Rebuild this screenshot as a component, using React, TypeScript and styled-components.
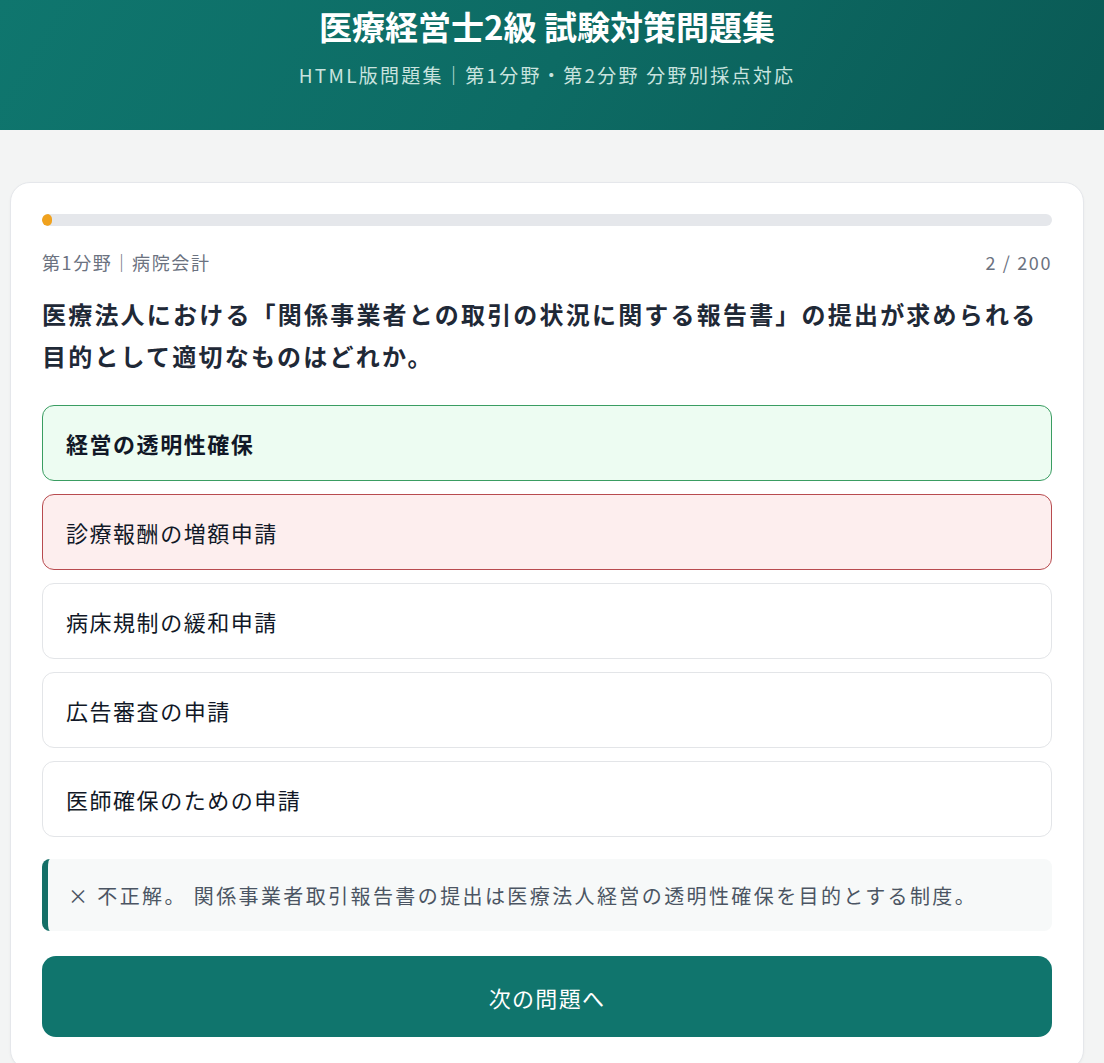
import React from "react";
import styled, { createGlobalStyle } from "styled-components";

const Global = createGlobalStyle`
  html, body { margin: 0; padding: 0; background: #f3f4f4; }
  body { font-family: "Noto Sans CJK JP", "Noto Sans", sans-serif; color: #1f2937; }
  * { box-sizing: border-box; }
`;

const Header = styled.header`
  height: 130px;
  background: linear-gradient(120deg, #0f766e 0%, #0d6b64 50%, #0a5a55 100%);
  display: flex;
  flex-direction: column;
  align-items: center;
  padding: 4px 10px 0 0;
`;

const Title = styled.h1`
  margin: 0;
  color: #ffffff;
  font-size: 33px;
  font-weight: 700;
  line-height: 44px;
  letter-spacing: 0;
`;

const Subtitle = styled.p`
  margin: 12px 0 0;
  color: #c9e3df;
  font-size: 19px;
  line-height: 30px;
  letter-spacing: 0.12em;
`;

const Main = styled.main`
  padding: 52px 20px 0 10px;
`;

const Card = styled.section`
  background: #ffffff;
  border: 1px solid #e5e7eb;
  border-radius: 20px;
  padding: 31px 31px 32px;
  box-shadow: 0 1px 3px rgba(0, 0, 0, 0.04);
`;

const Track = styled.div`
  height: 12px;
  border-radius: 6px;
  background: #e5e7eb;
  overflow: hidden;
`;

const Fill = styled.div`
  height: 100%;
  border-radius: 6px;
  background: #f0a21e;
`;

const Meta = styled.div`
  display: flex;
  justify-content: space-between;
  margin-top: 23px;
  color: #6b7280;
  font-size: 18px;
  line-height: 26px;
  letter-spacing: 0.09em;
`;

const Question = styled.h2`
  margin: 18px 0 0;
  font-size: 24px;
  font-weight: 700;
  line-height: 42px;
  letter-spacing: 2.2px;
  color: #1f2937;
`;

const Options = styled.div`
  display: flex;
  flex-direction: column;
  gap: 13px;
  margin-top: 28px;
`;

type State = "correct" | "wrong" | "none";

const Option = styled.button<{ $state: State }>`
  height: 76px;
  display: flex;
  align-items: center;
  padding: 0 23px;
  border-radius: 12px;
  font-family: inherit;
  font-size: 22px;
  letter-spacing: 0.07em;
  text-align: left;
  color: #111827;
  cursor: pointer;
  font-weight: ${(p) => (p.$state === "correct" ? 700 : 400)};
  background: ${(p) =>
    p.$state === "correct" ? "#edfcf2" : p.$state === "wrong" ? "#fdeeee" : "#ffffff"};
  border: 1.5px solid
    ${(p) =>
      p.$state === "correct" ? "#3a9d62" : p.$state === "wrong" ? "#b84b4f" : "#e3e5e8"};
`;

const Feedback = styled.div`
  margin-top: 22px;
  height: 72px;
  display: flex;
  align-items: center;
  padding-left: 20px;
  background: #f7f9f9;
  border-left: 6px solid #146f67;
  border-radius: 8px;
  color: #4b5563;
  font-size: 20px;
  letter-spacing: 0.12em;
`;

const NextButton = styled.button`
  margin-top: 25px;
  width: 100%;
  height: 81px;
  border: none;
  border-radius: 14px;
  background: #10756d;
  color: #ffffff;
  font-family: inherit;
  font-size: 22px;
  letter-spacing: 0.06em;
  cursor: pointer;
`;

const options: { text: string; state: State }[] = [
  { text: "経営の透明性確保", state: "correct" },
  { text: "診療報酬の増額申請", state: "wrong" },
  { text: "病床規制の緩和申請", state: "none" },
  { text: "広告審査の申請", state: "none" },
  { text: "医師確保のための申請", state: "none" },
];

export default function App() {
  const current = 2;
  const total = 200;
  return (
    <>
      <Global />
      <Header>
        <Title>医療経営士2級 試験対策問題集</Title>
        <Subtitle>HTML版問題集｜第1分野・第2分野 分野別採点対応</Subtitle>
      </Header>
      <Main>
        <Card>
          <Track>
            <Fill style={{ width: `${(current / total) * 100}%` }} />
          </Track>
          <Meta>
            <span>第1分野｜病院会計</span>
            <span>
              {current} / {total}
            </span>
          </Meta>
          <Question>
            医療法人における「関係事業者との取引の状況に関する報告書」の提出が求められる目的として適切なものはどれか。
          </Question>
          <Options>
            {options.map((o) => (
              <Option key={o.text} $state={o.state}>
                {o.text}
              </Option>
            ))}
          </Options>
          <Feedback>
            × 不正解。 関係事業者取引報告書の提出は医療法人経営の透明性確保を目的とする制度。
          </Feedback>
          <NextButton>次の問題へ</NextButton>
        </Card>
      </Main>
    </>
  );
}
